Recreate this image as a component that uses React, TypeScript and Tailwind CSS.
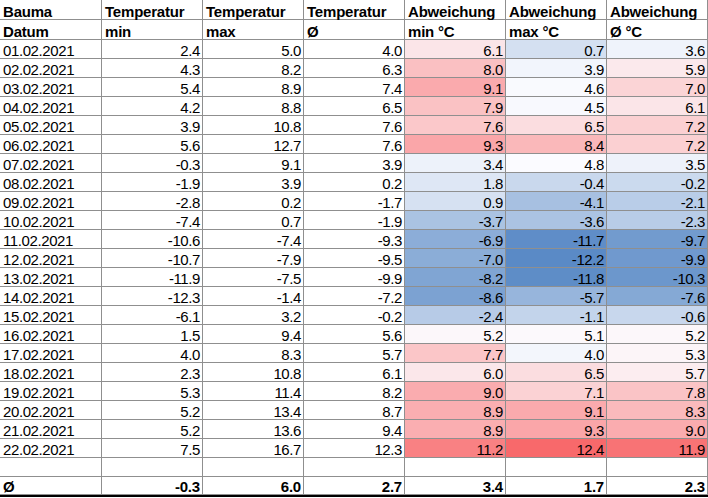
import React from "react";

type Row = {
  date: string;
  min: string;
  max: string;
  avg: string;
  dMin: number;
  dMax: number;
  dAvg: number;
};

const rows: Row[] = [
  { date: "01.02.2021", min: "2.4", max: "5.0", avg: "4.0", dMin: 6.1, dMax: 0.7, dAvg: 3.6 },
  { date: "02.02.2021", min: "4.3", max: "8.2", avg: "6.3", dMin: 8.0, dMax: 3.9, dAvg: 5.9 },
  { date: "03.02.2021", min: "5.4", max: "8.9", avg: "7.4", dMin: 9.1, dMax: 4.6, dAvg: 7.0 },
  { date: "04.02.2021", min: "4.2", max: "8.8", avg: "6.5", dMin: 7.9, dMax: 4.5, dAvg: 6.1 },
  { date: "05.02.2021", min: "3.9", max: "10.8", avg: "7.6", dMin: 7.6, dMax: 6.5, dAvg: 7.2 },
  { date: "06.02.2021", min: "5.6", max: "12.7", avg: "7.6", dMin: 9.3, dMax: 8.4, dAvg: 7.2 },
  { date: "07.02.2021", min: "-0.3", max: "9.1", avg: "3.9", dMin: 3.4, dMax: 4.8, dAvg: 3.5 },
  { date: "08.02.2021", min: "-1.9", max: "3.9", avg: "0.2", dMin: 1.8, dMax: -0.4, dAvg: -0.2 },
  { date: "09.02.2021", min: "-2.8", max: "0.2", avg: "-1.7", dMin: 0.9, dMax: -4.1, dAvg: -2.1 },
  { date: "10.02.2021", min: "-7.4", max: "0.7", avg: "-1.9", dMin: -3.7, dMax: -3.6, dAvg: -2.3 },
  { date: "11.02.2021", min: "-10.6", max: "-7.4", avg: "-9.3", dMin: -6.9, dMax: -11.7, dAvg: -9.7 },
  { date: "12.02.2021", min: "-10.7", max: "-7.9", avg: "-9.5", dMin: -7.0, dMax: -12.2, dAvg: -9.9 },
  { date: "13.02.2021", min: "-11.9", max: "-7.5", avg: "-9.9", dMin: -8.2, dMax: -11.8, dAvg: -10.3 },
  { date: "14.02.2021", min: "-12.3", max: "-1.4", avg: "-7.2", dMin: -8.6, dMax: -5.7, dAvg: -7.6 },
  { date: "15.02.2021", min: "-6.1", max: "3.2", avg: "-0.2", dMin: -2.4, dMax: -1.1, dAvg: -0.6 },
  { date: "16.02.2021", min: "1.5", max: "9.4", avg: "5.6", dMin: 5.2, dMax: 5.1, dAvg: 5.2 },
  { date: "17.02.2021", min: "4.0", max: "8.3", avg: "5.7", dMin: 7.7, dMax: 4.0, dAvg: 5.3 },
  { date: "18.02.2021", min: "2.3", max: "10.8", avg: "6.1", dMin: 6.0, dMax: 6.5, dAvg: 5.7 },
  { date: "19.02.2021", min: "5.3", max: "11.4", avg: "8.2", dMin: 9.0, dMax: 7.1, dAvg: 7.8 },
  { date: "20.02.2021", min: "5.2", max: "13.4", avg: "8.7", dMin: 8.9, dMax: 9.1, dAvg: 8.3 },
  { date: "21.02.2021", min: "5.2", max: "13.6", avg: "9.4", dMin: 8.9, dMax: 9.3, dAvg: 9.0 },
  { date: "22.02.2021", min: "7.5", max: "16.7", avg: "12.3", dMin: 11.2, dMax: 12.4, dAvg: 11.9 },
];

// Excel style 3-colour scale: lowest blue, 50th percentile white, highest red
const allDev = rows.flatMap((r) => [r.dMin, r.dMax, r.dAvg]);
const sorted = [...allDev].sort((a, b) => a - b);
const lo = sorted[0];
const hi = sorted[sorted.length - 1];
const mid = (sorted[sorted.length / 2 - 1] + sorted[sorted.length / 2]) / 2;

const blue = [90, 138, 198];
const white = [252, 252, 255];
const red = [248, 105, 107];

function scaleColor(v: number) {
  const mix = (a: number[], b: number[], t: number) =>
    a.map((x, i) => Math.round(x + (b[i] - x) * t));
  const c = v <= mid ? mix(blue, white, (v - lo) / (mid - lo)) : mix(white, red, (v - mid) / (hi - mid));
  return `rgb(${c[0]}, ${c[1]}, ${c[2]})`;
}

const cell = "flex items-end border-r border-b border-[#8f8f8f] px-[3px] leading-[15px] whitespace-nowrap";
const gridRow = "grid grid-cols-[102px_101px_101px_101px_101px_101px_101px]";

function Left({ children, bold }: { children?: React.ReactNode; bold?: boolean }) {
  return (
    <div className={`${cell} justify-start ${bold ? "font-bold tracking-[-0.2px]" : "tracking-[-0.4px]"}`}>
      {children}
    </div>
  );
}

function Num({ children, bold, bg }: { children?: React.ReactNode; bold?: boolean; bg?: string }) {
  return (
    <div
      className={`${cell} justify-end pr-[2px] ${bold ? "font-bold tracking-[-0.2px]" : "tracking-[-0.4px]"}`}
      style={bg ? { backgroundColor: bg } : undefined}
    >
      {children}
    </div>
  );
}

export default function App() {
  return (
    <div className="w-[708px] h-[498px] overflow-hidden bg-white text-black text-[15px] font-['Liberation_Sans',Arial,sans-serif]">
      <div className={`${gridRow} h-[20px]`}>
        <Left bold>Bauma</Left>
        <Left bold>Temperatur</Left>
        <Left bold>Temperatur</Left>
        <Left bold>Temperatur</Left>
        <Left bold>Abweichung</Left>
        <Left bold>Abweichung</Left>
        <Left bold>Abweichung</Left>
      </div>
      <div className={`${gridRow} h-[20px]`}>
        <Left bold>Datum</Left>
        <Left bold>min</Left>
        <Left bold>max</Left>
        <Left bold>Ø</Left>
        <Left bold>min °C</Left>
        <Left bold>max °C</Left>
        <Left bold>Ø °C</Left>
      </div>
      {rows.map((r) => (
        <div key={r.date} className={`${gridRow} h-[19px]`}>
          <Left>{r.date}</Left>
          <Num>{r.min}</Num>
          <Num>{r.max}</Num>
          <Num>{r.avg}</Num>
          <Num bg={scaleColor(r.dMin)}>{r.dMin.toFixed(1)}</Num>
          <Num bg={scaleColor(r.dMax)}>{r.dMax.toFixed(1)}</Num>
          <Num bg={scaleColor(r.dAvg)}>{r.dAvg.toFixed(1)}</Num>
        </div>
      ))}
      <div className={`${gridRow} h-[19px]`}>
        <Left />
        <Num />
        <Num />
        <Num />
        <Num />
        <Num />
        <Num />
      </div>
      <div className={`${gridRow} h-[20px] border-b-2 border-black`}>
        <Left bold>Ø</Left>
        <Num bold>-0.3</Num>
        <Num bold>6.0</Num>
        <Num bold>2.7</Num>
        <Num bold>3.4</Num>
        <Num bold>1.7</Num>
        <Num bold>2.3</Num>
      </div>
    </div>
  );
}
